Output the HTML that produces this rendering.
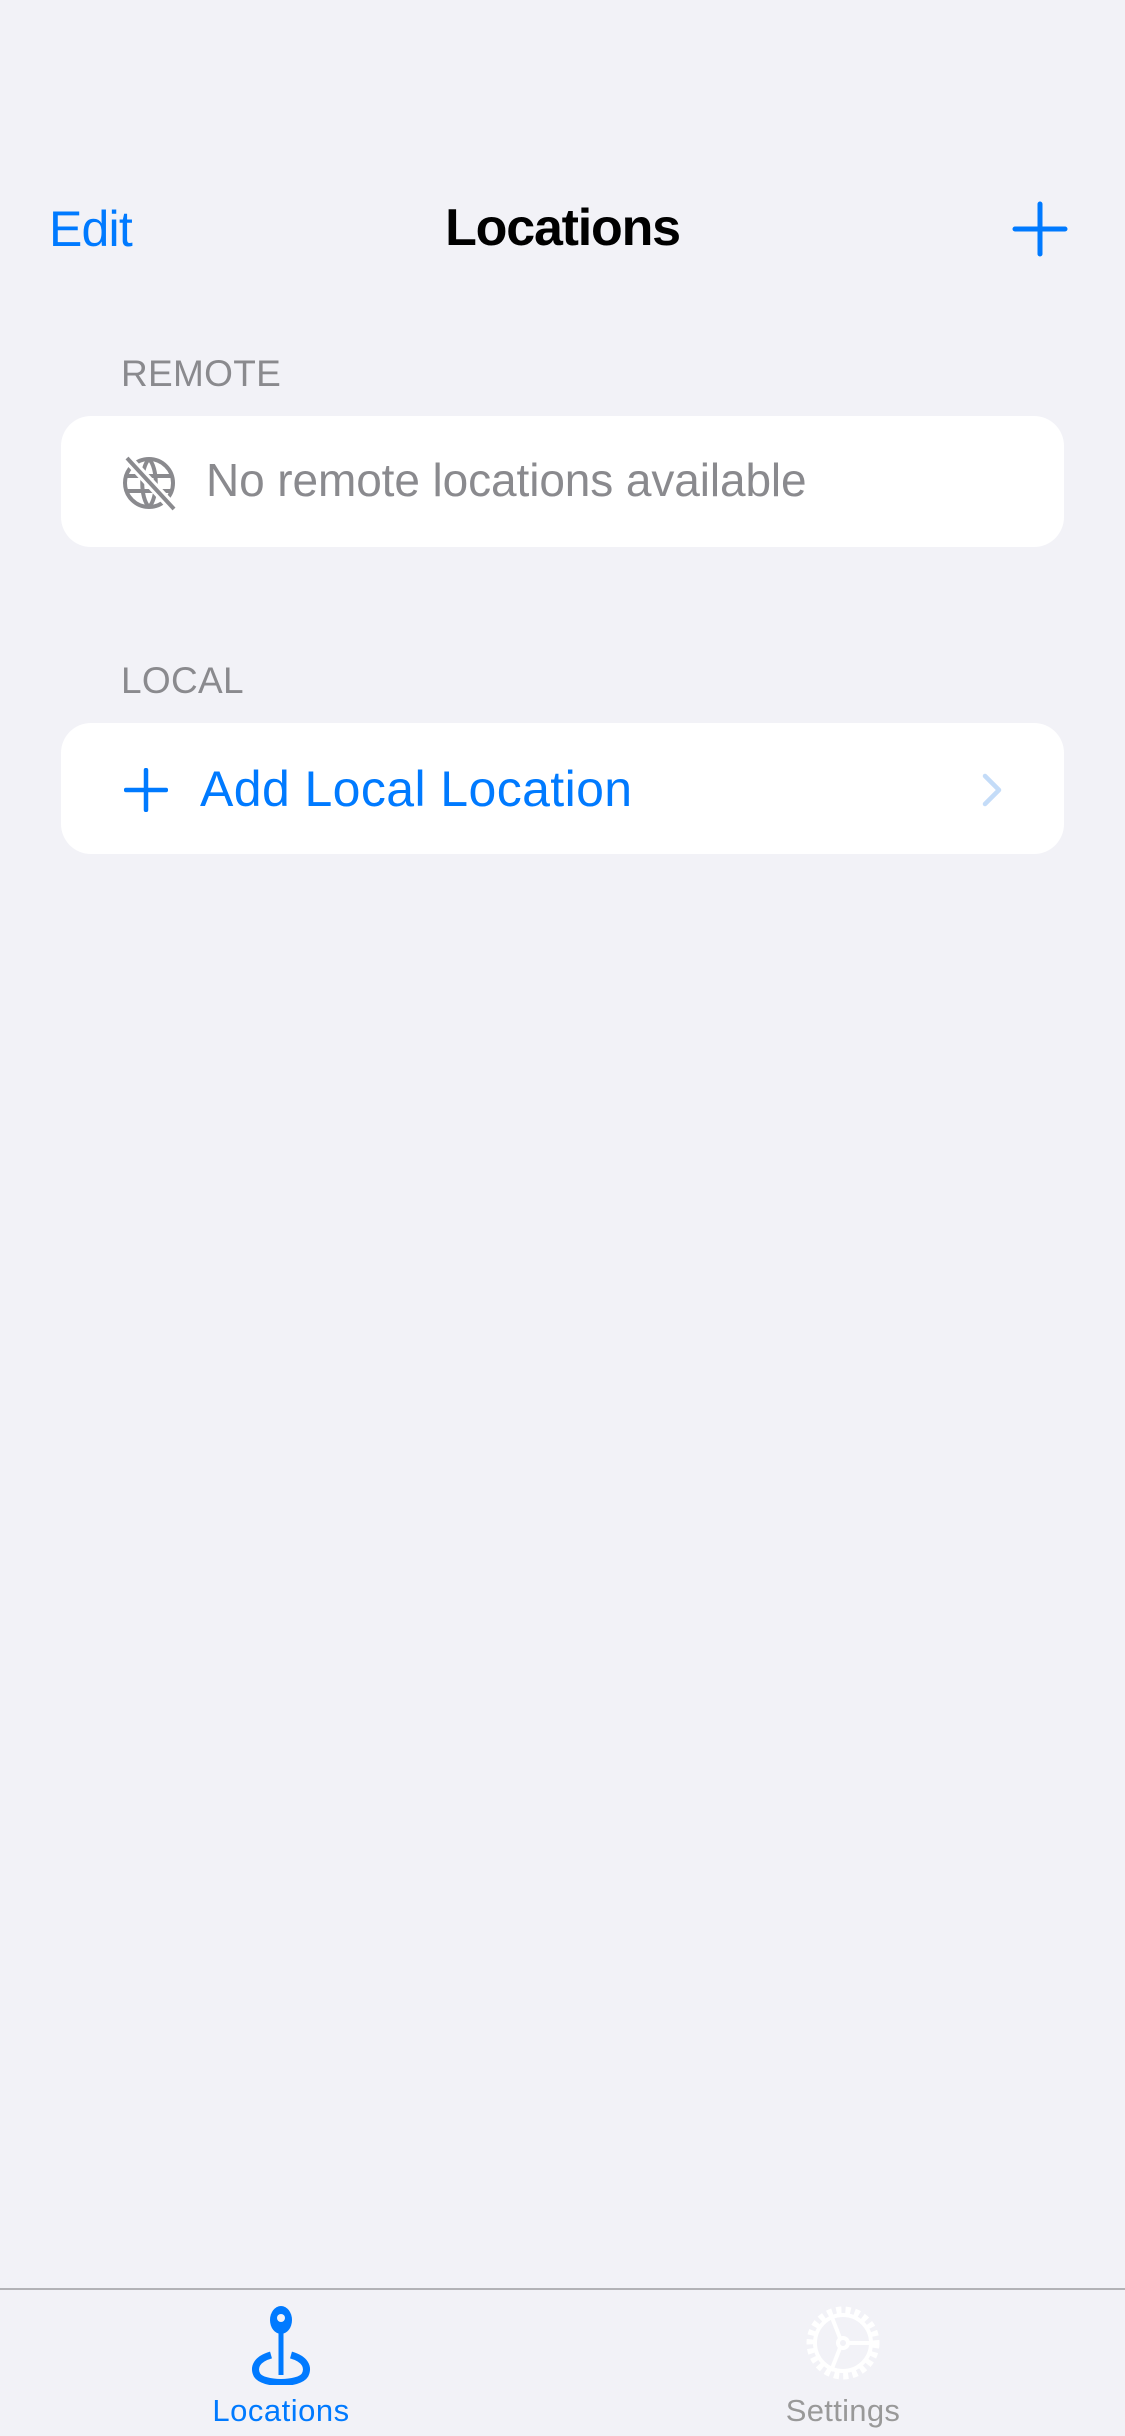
<!DOCTYPE html>
<html><head><meta charset="utf-8"><style>
body{margin:0;width:1125px;height:2436px;background:#f2f2f7;font-family:"Liberation Sans",sans-serif;position:relative;overflow:hidden}
.a{position:absolute;white-space:nowrap}
svg.a{display:block}
.card{position:absolute;left:61px;width:1003px;background:#fff;border-radius:30px}
.blue{color:#007aff}
</style></head><body>
<div class="a blue" style="left:49px;top:200px;font-size:50px;letter-spacing:-0.8px">Edit</div>
<div class="a" style="left:0;width:1125px;text-align:center;top:198px;font-size:52px;font-weight:bold;letter-spacing:-1.2px">Locations</div>
<svg class="a" style="left:1012px;top:201px" width="56" height="56"><path d="M28 3V53M3 28H53" stroke="#007aff" stroke-width="5" stroke-linecap="round"/></svg>

<div class="a" style="left:121px;top:353px;font-size:37px;color:#8a8a8e;letter-spacing:0.3px">REMOTE</div>
<div class="card" style="top:416px;height:131px"></div>
<svg class="a" style="left:120px;top:454px" width="60" height="60" fill="none" stroke="#8a8a8e" stroke-width="4">
<circle cx="29" cy="29" r="24"/><path d="M29 5C20 14 20 44 29 53M29 5C38 14 38 44 29 53M6 22H52M6 37H52"/>
<path d="M6 3L55 56" stroke="#fff" stroke-width="10"/><path d="M7 4L54 55"/></svg>
<div class="a" style="left:206px;top:453px;font-size:46px;color:#8a8a8e;letter-spacing:-0.1px">No remote locations available</div>

<div class="a" style="left:121px;top:660px;font-size:37px;color:#8a8a8e;letter-spacing:0.3px">LOCAL</div>
<div class="card" style="top:723px;height:131px"></div>
<svg class="a" style="left:124px;top:768px" width="44" height="44"><path d="M22 2V42M2 22H42" stroke="#007aff" stroke-width="4.5" stroke-linecap="round"/></svg>
<div class="a blue" style="left:200px;top:760px;font-size:50px;letter-spacing:0.4px">Add Local Location</div>
<svg class="a" style="left:980px;top:772px" width="26" height="36"><path d="M5 4L19 18L5 32" stroke="#c4dcf8" stroke-width="4.5" fill="none" stroke-linecap="round" stroke-linejoin="round"/></svg>

<div class="a" style="left:0;top:2288px;width:1125px;height:2px;background:#b2b2b6"></div>
<svg class="a" style="left:245px;top:2305px" width="74" height="80">
<path d="M36 20V70" stroke="#007aff" stroke-width="5"/>
<ellipse cx="36" cy="15" rx="11" ry="14" fill="#007aff"/><circle cx="36" cy="13" r="4" fill="#f2f2f7"/>
<path d="M26 50C12 54 8 62 12 70C18 80 54 80 60 70C64 62 60 54 46 50" stroke="#007aff" stroke-width="7" fill="none"/></svg>
<div class="a blue" style="left:181px;width:200px;text-align:center;top:2393px;font-size:31px;letter-spacing:0.5px">Locations</div>
<svg class="a" style="left:803px;top:2303px" width="80" height="80" fill="none" stroke="#fff" stroke-width="4">
<circle cx="40" cy="40" r="32" stroke-dasharray="5 4" stroke-width="9"/><circle cx="40" cy="40" r="28"/>
<circle cx="40" cy="40" r="5"/><path d="M45 40H68M37 35L28 12M37 45L28 68"/></svg>
<div class="a" style="left:743px;width:200px;text-align:center;top:2393px;font-size:31px;color:#999;letter-spacing:0.3px">Settings</div>
</body></html>
